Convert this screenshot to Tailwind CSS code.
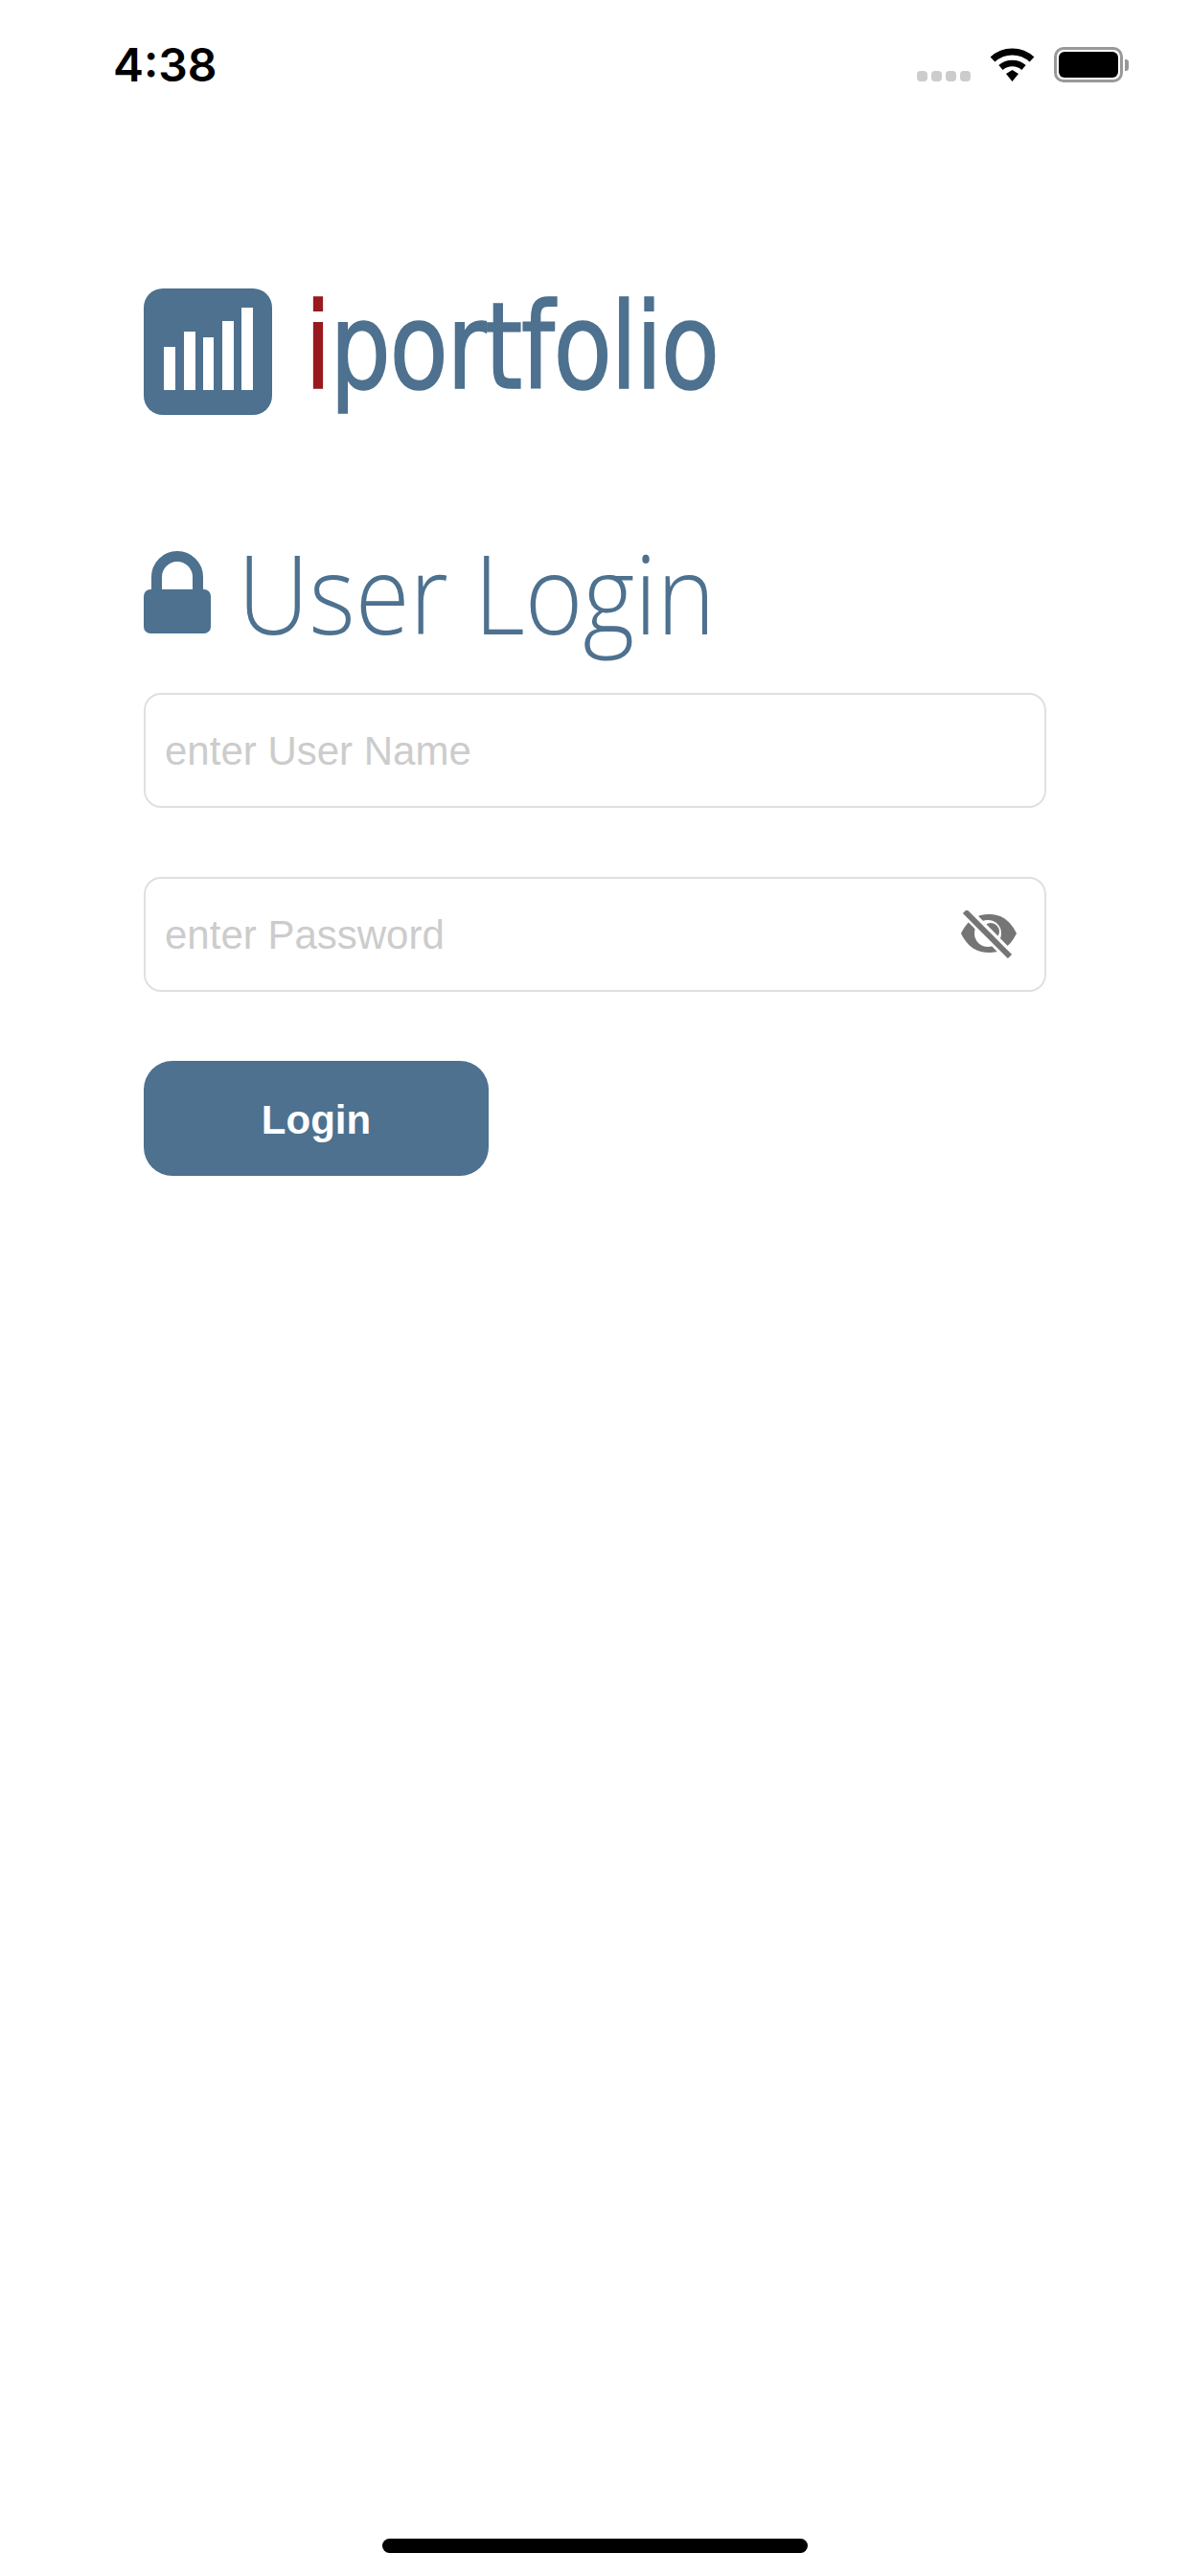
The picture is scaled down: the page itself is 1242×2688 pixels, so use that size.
<!DOCTYPE html>
<html lang="en">
<head>
<meta charset="utf-8">
<title>iPortfolio Login</title>
<script src="https://cdn.jsdelivr.net/npm/@tailwindcss/browser@4"></script>
</head>
<body class="bg-white">
<div class="w-[1242px] h-[2688px] flex flex-col bg-white overflow-hidden font-['Liberation_Sans',Arial,sans-serif]">
  <!-- status bar -->
  <div class="h-[132px] shrink-0 flex items-start pl-[118px] pr-[64px] pt-[50px]">
    <span class="font-['Inter',sans-serif] font-semibold text-[48px] leading-[36px] text-black">4:38</span>
    <div class="ml-auto flex items-start -mt-[1px]">
      <div class="flex gap-[4px] mt-[25px] mr-[20px]">
        <span class="w-[11px] h-[11px] rounded-[4px] bg-[#cccccc]"></span>
        <span class="w-[11px] h-[11px] rounded-[4px] bg-[#cccccc]"></span>
        <span class="w-[11px] h-[11px] rounded-[4px] bg-[#cccccc]"></span>
        <span class="w-[11px] h-[11px] rounded-[4px] bg-[#cccccc]"></span>
      </div>
      <svg class="w-[47px] h-[36px] mr-[20px]" viewBox="0 0 47 36" fill="none">
        <path d="M3 13 A30 30 0 0 1 44 13" stroke="#000" stroke-width="7"/>
        <path d="M11.5 21.5 A18 18 0 0 1 35.5 21.5" stroke="#000" stroke-width="6.5"/>
        <path d="M17 28 L23.5 24 L30 28 L23.5 36Z" fill="#000"/>
      </svg>
      <div class="flex items-center">
        <div class="w-[72px] h-[37px] rounded-[10px] border-[3px] border-[#999999] p-[2px] bg-white">
          <div class="w-full h-full rounded-[6px] bg-black"></div>
        </div>
        <span class="w-[4px] h-[12px] ml-[2px] rounded-r-[3px] bg-[#999999]"></span>
      </div>
    </div>
  </div>

  <main class="flex flex-col pl-[150px] pr-[150px]">
    <!-- logo -->
    <div class="mt-[169px] h-[132px] flex items-start">
      <div class="w-[134px] h-[132px] shrink-0 rounded-[20px] bg-[#4d718f] flex items-end gap-[8.5px] pl-[21px] pb-[26px]">
        <span class="w-[12px] h-[45px] bg-white"></span>
        <span class="w-[12px] h-[61px] bg-white"></span>
        <span class="w-[11px] h-[55px] bg-white"></span>
        <span class="w-[12px] h-[72px] bg-white"></span>
        <span class="w-[12px] h-[86px] bg-white"></span>
      </div>
      <div class="ml-[34px] h-[132px]">
        <div class="font-['DejaVu_Sans',sans-serif] text-[124px] leading-[132px] tracking-[-2px] text-[#4d718f] [-webkit-text-stroke:1.5px_currentColor] origin-top-left scale-x-[0.81] -translate-y-[5px] whitespace-nowrap"><span class="text-[#981a20]">i</span>portfolio</div>
      </div>
    </div>

    <!-- heading -->
    <div class="mt-[142px] h-[86px] flex items-start">
      <svg class="w-[70px] h-[86px] shrink-0" viewBox="0 0 70 86" fill="none">
        <path d="M13.5 44 V27 A21.5 21.5 0 0 1 56.5 27 V44" stroke="#4d718f" stroke-width="11"/>
        <rect x="0" y="40" width="70" height="46" rx="7" fill="#4d718f"/>
      </svg>
      <h1 class="ml-[28px] font-['Open_Sans',sans-serif] font-light text-[115px] leading-[86px] text-[#4d718f] origin-left scale-x-[0.9] whitespace-nowrap">User Login</h1>
    </div>

    <!-- fields -->
    <div class="mt-[62px] h-[120px] rounded-[18px] border-2 border-[#e0e0e0] flex items-center pl-[20px] text-[42px] text-[#cccccc]">enter User Name</div>
    <div class="mt-[72px] h-[120px] rounded-[18px] border-2 border-[#e0e0e0] flex items-center pl-[20px] pr-[29px] text-[42px] text-[#cccccc]">
      <span>enter Password</span>
      <svg class="ml-auto w-[58px] h-[50px]" viewBox="0 0 58 50" fill="none">
        <path d="M0 24 C8 8 18 4 29 4 C40 4 50 8 58 24 C50 40 40 44 29 44 C18 44 8 40 0 24Z" fill="#757575"/>
        <circle cx="28" cy="24" r="14" fill="#fff"/>
        <circle cx="31" cy="22" r="9" fill="#757575"/>
        <path d="M3 -1 L51 48" stroke="#fff" stroke-width="12"/>
        <path d="M4 1 L51 48" stroke="#757575" stroke-width="6"/>
      </svg>
    </div>

    <button class="mt-[72px] pt-[2px] w-[360px] h-[120px] rounded-[30px] bg-[#4d718f] text-white font-bold text-[42px]">Login</button>
  </main>

  <!-- home indicator -->
  <div class="mt-auto mb-[24px] mx-auto w-[444px] h-[15px] rounded-full bg-black"></div>
</div>
</body>
</html>
